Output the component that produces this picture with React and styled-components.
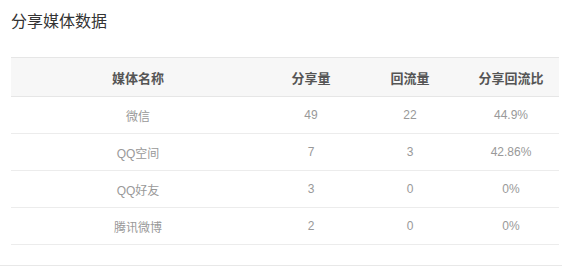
import styled, { createGlobalStyle } from 'styled-components';

const GlobalStyle = createGlobalStyle`
  body {
    margin: 0;
    background: #fff;
    font-family: "Liberation Sans", "Noto Sans CJK SC", sans-serif;
  }
`;

const Panel = styled.section`
  width: 562px;
  padding: 12px 0 20px 11px;
  box-sizing: border-box;
  border-bottom: 1px solid #e8e8e8;
`;

const Title = styled.h3`
  margin: 0 0 25px;
  font-size: 16px;
  line-height: 20px;
  font-weight: normal;
  color: #333;
`;

const Table = styled.table`
  width: 548px;
  border-collapse: collapse;
  table-layout: fixed;
  font-size: 12px;
`;

const HeadRow = styled.tr`
  background: #f7f7f7;
  border-top: 1px solid #e6e6e6;
  border-bottom: 1px solid #e6e6e6;
`;

const Th = styled.th`
  width: ${(p) => p.$w}px;
  height: 38px;
  padding: 0;
  text-align: center;
  font-size: 13px;
  font-weight: bold;
  color: #555;
`;

const Row = styled.tr`
  border-bottom: 1px solid #ececec;
`;

const Td = styled.td`
  height: 36px;
  padding: 0;
  text-align: center;
  color: #999;
`;

const columns = [
  { title: '媒体名称', w: 254 },
  { title: '分享量', w: 92 },
  { title: '回流量', w: 106 },
  { title: '分享回流比', w: 96 },
];

const rows = [
  ['微信', 49, 22, '44.9%'],
  ['QQ空间', 7, 3, '42.86%'],
  ['QQ好友', 3, 0, '0%'],
  ['腾讯微博', 2, 0, '0%'],
];

export default function App() {
  return (
    <>
      <GlobalStyle />
      <Panel>
        <Title>分享媒体数据</Title>
        <Table>
          <thead>
            <HeadRow>
              {columns.map((c) => (
                <Th key={c.title} $w={c.w}>{c.title}</Th>
              ))}
            </HeadRow>
          </thead>
          <tbody>
            {rows.map((r) => (
              <Row key={r[0]}>
                {r.map((v, i) => (
                  <Td key={i}>{v}</Td>
                ))}
              </Row>
            ))}
          </tbody>
        </Table>
      </Panel>
    </>
  );
}
